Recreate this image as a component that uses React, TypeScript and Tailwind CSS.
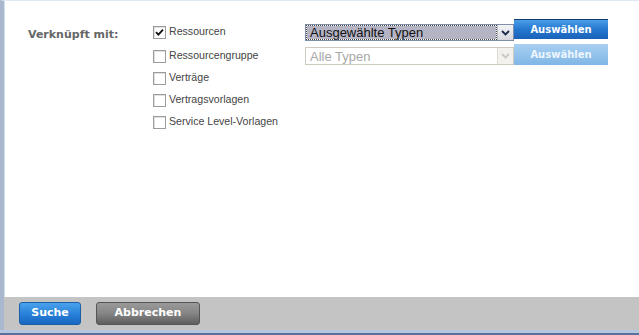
import React from 'react'

const font = { fontFamily: '"Liberation Sans", Arial, sans-serif' }
const verdana = { fontFamily: '"DejaVu Sans", Verdana, sans-serif' }

function Box({ checked }: { checked?: boolean }) {
  return (
    <span className="flex h-[13px] w-[13px] shrink-0 items-center justify-center border border-[#9c9c9c] bg-white shadow-[inset_1px_1px_0_#e0e0e0]">
      {checked && (
        <svg width="9" height="9" viewBox="0 0 9 9">
          <path d="M1 4.2 L3.4 6.6 L8 1.6" fill="none" stroke="#111" strokeWidth="1.8" />
        </svg>
      )}
    </span>
  )
}

function Row({ label, checked }: { label: string; checked?: boolean }) {
  return (
    <label className="flex h-[22px] items-center gap-[3px] text-[10.6px] text-[#444]">
      <Box checked={checked} />
      <span>{label}</span>
    </label>
  )
}

function Arrow({ disabled }: { disabled?: boolean }) {
  return (
    <span
      className={
        'flex h-full w-[16px] items-center justify-center border-l ' +
        (disabled
          ? 'border-[#e0ded4] bg-[#f2f1ec]'
          : 'border-[#b6bcc8] bg-gradient-to-b from-[#f4f4f6] to-[#d6d8de]')
      }
    >
      <svg width="9" height="6" viewBox="0 0 9 6">
        <path d="M1 1 L4.5 4.5 L8 1" fill="none" stroke={disabled ? '#c8c8c8' : '#1a2a4a'} strokeWidth="1.8" />
      </svg>
    </span>
  )
}

function BlueButton({ children, pale }: { children: React.ReactNode; pale?: boolean }) {
  return (
    <button
      className={
        'flex w-[94px] items-center justify-center text-[10px] font-bold ' +
        (pale
          ? 'h-[21px] bg-gradient-to-b from-[#a8d0f2] to-[#80b6e6] text-[#eef6ff]'
          : 'h-[20px] border-t border-[#123c70] bg-gradient-to-b from-[#4a9ee8] via-[#2577cf] to-[#1a62b8] text-white')
      }
      style={verdana}
    >
      {children}
    </button>
  )
}

export default function App() {
  return (
    <div className="flex h-[335px] w-[639px] flex-col bg-white" style={font}>
      <div className="flex flex-1 border-l-[4px] border-t border-[#a9b8cf] border-t-[#dfe8f4]">
        <div className="flex flex-1 flex-col border-l border-[#d6dfec]">
          <div className="flex pt-[18px]">
            <div className="w-[148px] pl-[23px] pt-[8px] text-[11px] font-bold text-[#666]" style={verdana}>
              Verknüpft mit:
            </div>
            <div className="flex w-[152px] flex-col pt-[2px]">
              <Row label="Ressourcen" checked />
              <div className="h-[2px]" />
              <Row label="Ressourcengruppe" />
              <Row label="Verträge" />
              <Row label="Vertragsvorlagen" />
              <Row label="Service Level-Vorlagen" />
            </div>
            <div className="flex flex-col">
              <div className="flex items-start">
                <div className="mt-[5px] flex h-[17px] w-[209px] border border-[#7f8ea8] bg-white">
                  <div className="m-[1px] flex flex-1 items-center bg-[#b4b4c4] px-[3px] text-[13px] leading-none text-[#111] outline-dotted outline-1 outline-[#444]">
                    Ausgewählte Typen
                  </div>
                  <Arrow />
                </div>
                <BlueButton>Auswählen</BlueButton>
              </div>
              <div className="mt-[3px] flex items-start">
                <div className="mt-[3px] flex h-[18px] w-[209px] border border-[#cdcbc0] bg-white">
                  <div className="flex flex-1 items-center px-[4px] text-[13px] leading-none text-[#a8a8a8]">
                    Alle Typen
                  </div>
                  <Arrow disabled />
                </div>
                <BlueButton pale>Auswählen</BlueButton>
              </div>
            </div>
          </div>
        </div>
      </div>
      <div className="flex h-[33px] items-center gap-[15px] border-l-[4px] border-[#a9b8cf] bg-[#c4c4c4] pl-[15px]">
        <button
          className="flex h-[23px] w-[62px] items-center justify-center rounded-[3px] border border-[#1a5ea8] bg-gradient-to-b from-[#4aa2ec] via-[#2a82da] to-[#1766c0] text-[11px] font-bold text-white"
          style={verdana}
        >
          Suche
        </button>
        <button
          className="flex h-[23px] w-[104px] items-center justify-center rounded-[3px] border border-[#555] bg-gradient-to-b from-[#9a9a9a] via-[#858585] to-[#5e5e5e] text-[11px] font-bold text-white"
          style={verdana}
        >
          Abbrechen
        </button>
      </div>
      <div className="h-[3px] bg-[#b4c8e2]" />
      <div className="h-[2px] bg-[#5b6f98]" />
    </div>
  )
}
